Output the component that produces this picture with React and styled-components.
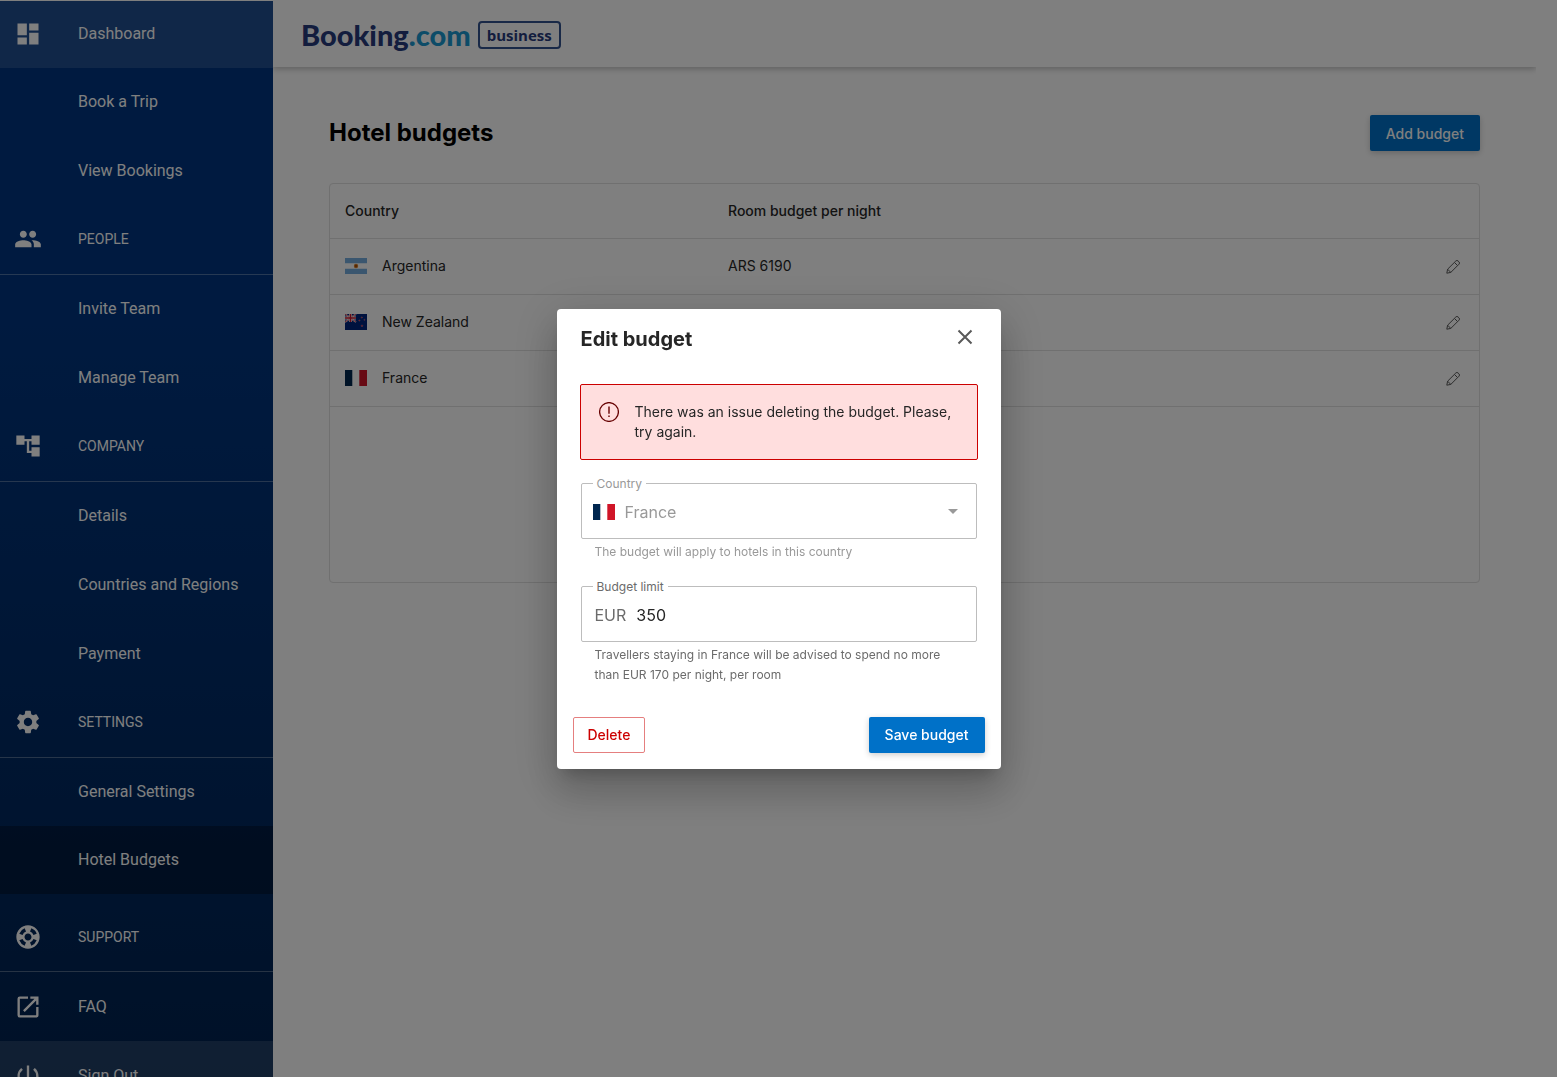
import React from 'react'
import styled, { createGlobalStyle } from 'styled-components'
import {
  MdAccountTree,
  MdDashboard,
  MdOpenInNew,
  MdPeople,
  MdPowerSettingsNew,
  MdSettings,
  MdSupport,
} from 'react-icons/md'

const SIDEBAR_WIDTH = 273

const GlobalStyle = createGlobalStyle`
  *, *::before, *::after {
    box-sizing: border-box;
  }
  body {
    margin: 0;
    background: #fff;
    color: #262626;
    font-family: Inter, sans-serif;
    font-size: 14px;
    line-height: 20px;
  }
  button, input, select {
    font-family: inherit;
  }
`

const Shell = styled.div`
  display: flex;
  height: 100vh;
  overflow: hidden;
`

const Sidebar = styled.nav`
  flex: 0 0 ${SIDEBAR_WIDTH}px;
  overflow: hidden;
  border-top: 1px solid #fff;
  background: linear-gradient(#003580 30%, #00224f 100%);
  font-family: Roboto, sans-serif;
`

const NavList = styled.ul`
  margin: 0;
  padding: 0;
  list-style: none;
`

const NavLink = styled.a`
  display: flex;
  align-items: center;
  height: ${props => props.$height || 69}px;
  padding: 0 14px ${props => props.$padBottom ?? 2}px;
  color: #fff;
  font-size: 16px;
  text-decoration: none;
  ${props => props.$tone === 'light' ? 'background: rgba(255, 255, 255, 0.13);' : ''}
  ${props => props.$tone === 'dark' ? 'background: rgba(0, 0, 0, 0.3);' : ''}
`

const NavHeading = styled(NavLink).attrs({ as: 'div' })`
  border-bottom: 1px solid rgba(255, 255, 255, 0.3);
  padding-top: ${props => props.$padTop || 0}px;
  font-size: 14px;
`

const NavIcon = styled.span`
  display: flex;
  flex: 0 0 64px;
  font-size: 28px;
`

const Main = styled.div`
  flex: 1;
  min-width: 0;
  margin-right: 21px;
`

const TopBar = styled.header`
  display: flex;
  align-items: center;
  gap: 7px;
  height: 67px;
  padding: 2px 28px 0;
  box-shadow: 0 2px 6px rgba(0, 0, 0, 0.25);
  clip-path: inset(0 0 -12px 0);
`

const Wordmark = styled.span`
  color: #273b7d;
  font-family: Lato, sans-serif;
  font-size: 29px;
  font-weight: 900;
  line-height: 32px;

  & span {
    color: #1a98d0;
  }
`

const WordmarkTag = styled.span`
  padding: 0 7px;
  border: 2px solid #33538f;
  border-radius: 4px;
  color: #273b7d;
  font-family: 'Open Sans', sans-serif;
  font-size: 15px;
  font-weight: 700;
  line-height: 24px;
`

const Content = styled.main`
  padding: 48px 56px;
`

const PageHead = styled.div`
  display: flex;
  align-items: center;
  justify-content: space-between;
  margin-bottom: 32px;
`

const PageTitle = styled.h1`
  margin: 0;
  color: #000;
  font-size: 24px;
  font-weight: 700;
  line-height: 36px;
`

const Button = styled.button`
  height: 36px;
  padding: 0 16px;
  border: 0;
  border-radius: 2px;
  background: #0071c8;
  color: #fff;
  font-size: 14px;
  font-weight: 500;
  box-shadow: 0 2px 6px rgba(0, 0, 0, 0.2);
  cursor: pointer;
`

const DeleteButton = styled(Button)`
  padding: 0 14px;
  border: 1px solid #e57f7f;
  background: #fff;
  color: #cc0000;
  box-shadow: none;
`

const Panel = styled.div`
  min-height: 400px;
  border: 1px solid #e0e0e0;
  border-radius: 4px;
`

const Table = styled.table`
  width: 100%;
  border-collapse: collapse;
  table-layout: fixed;

  & th, & td {
    height: 56px;
    padding: 0 15px;
    border-bottom: 1px solid #e0e0e0;
    text-align: left;
    font-weight: 400;
  }
  & thead th {
    height: 54px;
    font-weight: 500;
  }
  & td:last-child {
    padding-right: 19px;
    text-align: right;
  }
`

const CountryName = styled.span`
  display: flex;
  align-items: center;
  gap: 15px;
`

const IconButton = styled.button`
  display: inline-flex;
  padding: 0;
  border: 0;
  background: none;
  color: #595959;
  vertical-align: middle;
  cursor: pointer;
`

const Backdrop = styled.div`
  position: fixed;
  inset: 0;
  z-index: 10;
  display: flex;
  align-items: center;
  justify-content: center;
  background: rgba(0, 0, 0, 0.5);
`

const Dialog = styled.form`
  width: 444px;
  max-width: 100%;
  border-radius: 4px;
  background: #fff;
  box-shadow:
    0 11px 15px -7px rgba(0, 0, 0, 0.2),
    0 24px 38px 3px rgba(0, 0, 0, 0.14),
    0 9px 46px 8px rgba(0, 0, 0, 0.12);
`

const DialogHead = styled.div`
  display: flex;
  align-items: flex-start;
  justify-content: space-between;
  height: 60px;
  padding: 20px 28px 0 24px;
`

const DialogTitle = styled.h2`
  margin: 0;
  font-size: 20px;
  font-weight: 700;
  line-height: 20px;
`

const DialogBody = styled.div`
  padding: 15px 24px 32px;
`

const DialogActions = styled.div`
  display: flex;
  justify-content: space-between;
  padding: 0 16px 16px;
`

const Alert = styled.div`
  display: flex;
  gap: 16px;
  margin: 0 -1px 23px;
  padding: 17px 18px;
  border: 1px solid #cc0000;
  border-radius: 2px;
  background: #ffdede;

  & svg {
    flex: none;
  }
  & p {
    margin: 0;
  }
`

const Field = styled.div`
  color: ${props => props.$disabled ? '#999' : '#6b6b6b'};

  & + & {
    margin-top: 24px;
  }
`

const FieldBox = styled.div`
  position: relative;
  display: flex;
  align-items: center;
  gap: 10px;
  height: 56px;
  padding: 2px 18px 0 ${props => props.$inset || 13}px;
  border: 1px solid #bdbdbd;
  border-radius: 2px;
  font-size: 16px;
`

const FieldLabel = styled.label`
  position: absolute;
  top: -9px;
  left: 11px;
  padding: 0 4px;
  background: #fff;
  font-size: 12px;
  line-height: 18px;
`

const Select = styled.select`
  flex: 1;
  padding: 0;
  border: 0;
  background: none;
  color: #999;
  font-size: 16px;
  appearance: none;
  opacity: 1;
`

const Input = styled.input`
  flex: 1;
  min-width: 0;
  padding: 0;
  border: 0;
  background: none;
  color: #262626;
  font-size: 16px;
  outline: none;
`

const Hint = styled.p`
  margin: 3px 14px 0;
  font-size: 12px;
`

const FlagSvg = styled.svg.attrs({
  width: 22,
  height: 16,
  viewBox: '0 0 22 16',
  'aria-hidden': true,
})`
  flex: none;
`

const Argentina = () => (
  <FlagSvg>
    <path fill="#fff" d="M0 0h22v16H0z" />
    <path fill="#74acdf" d="M0 0h22v5.300H0zM0 10.700h22V16H0z" />
    <circle cx="11" cy="8" r="2.200" fill="#d9822b" />
    <circle cx="11" cy="8" r="1.200" fill="#a8500f" />
  </FlagSvg>
)

const NewZealand = () => (
  <FlagSvg>
    <path fill="#00247d" d="M0 0h22v16H0z" />
    <path stroke="#fff" strokeWidth="1.600" d="M0 0l11 8M11 0L0 8" />
    <path stroke="#cc142b" strokeWidth="0.8" d="M0 0l11 8M11 0L0 8" />
    <path stroke="#fff" strokeWidth="2.800" d="M5.500 0v8M0 4h11" />
    <path stroke="#cc142b" strokeWidth="1.600" d="M5.500 0v8M0 4h11" />
    <g fill="#cc142b" stroke="#fff" strokeWidth="0.2">
      <circle cx="16.800" cy="3.500" r="0.7" />
      <circle cx="14.400" cy="6.500" r="0.7" />
      <circle cx="19.400" cy="5.800" r="0.6" />
      <circle cx="17" cy="11.800" r="0.9" />
    </g>
  </FlagSvg>
)

const France = () => (
  <FlagSvg>
    <path fill="#fff" d="M0 0h22v16H0z" />
    <path fill="#00264f" d="M0 0h7.300v16H0z" />
    <path fill="#d01528" d="M14.300 0H22v16h-7.700z" />
  </FlagSvg>
)

const PencilIcon = () => (
  <svg width="14" height="14" viewBox="0 0 14 14" fill="none" stroke="currentColor" aria-hidden="true">
    <path d="M.8 13.200l.8-4 8.200-8.200a1.600 1.600 0 0 1 2.300 0l.9.900a1.600 1.600 0 0 1 0 2.300l-8.200 8.200zM1.600 9.200l3.200 3.200M8.600 2.600l2.800 2.800" />
  </svg>
)

const CloseIcon = () => (
  <svg width="16" height="16" viewBox="0 0 16 16" fill="none" stroke="currentColor" strokeWidth="2" aria-hidden="true">
    <path d="M1.500 1.500l13 13M14.500 1.500l-13 13" />
  </svg>
)

const AlertIcon = () => (
  <svg width="20" height="20" viewBox="0 0 20 20" fill="none" stroke="#660000" aria-hidden="true">
    <circle cx="10" cy="10" r="9.400" strokeWidth="1.300" />
    <path strokeWidth="1.400" d="M10 4.500v7.200M10 13.400v1.500" />
  </svg>
)

const CaretIcon = () => (
  <svg width="10" height="5" viewBox="0 0 10 5" fill="currentColor" aria-hidden="true">
    <path d="M0 0h10L5 5z" />
  </svg>
)

const navItems = [
  { label: 'Dashboard', icon: MdDashboard, height: 67, tone: 'light' },
  { label: 'Book a Trip' },
  { label: 'View Bookings' },
  { label: 'PEOPLE', icon: MdPeople, heading: true },
  { label: 'Invite Team' },
  { label: 'Manage Team' },
  { label: 'COMPANY', icon: MdAccountTree, heading: true },
  { label: 'Details' },
  { label: 'Countries and Regions' },
  { label: 'Payment' },
  { label: 'SETTINGS', icon: MdSettings, heading: true },
  { label: 'General Settings', height: 68, padBottom: 0 },
  { label: 'Hotel Budgets', height: 68, padBottom: 0, tone: 'dark' },
  { label: 'SUPPORT', icon: MdSupport, heading: true, height: 78, padTop: 9, padBottom: 0 },
  { label: 'FAQ', icon: MdOpenInNew, padBottom: 0 },
  { label: 'Sign Out', icon: MdPowerSettingsNew, padBottom: 0, tone: 'light' },
]

const budgets = [
  { country: 'Argentina', flag: Argentina, amount: 'ARS 6190' },
  { country: 'New Zealand', flag: NewZealand, amount: 'NZD 250' },
  { country: 'France', flag: France, amount: 'EUR 350' },
]

const NavItem = ({ label, icon: Icon, heading, height, padTop, padBottom, tone }) => {
  const Row = heading ? NavHeading : NavLink
  return (
    <li>
      <Row
        href={heading ? undefined : '#'}
        $height={height}
        $padTop={padTop}
        $padBottom={padBottom}
        $tone={tone}
      >
        <NavIcon>{Icon && <Icon aria-hidden="true" />}</NavIcon>
        {label}
      </Row>
    </li>
  )
}

const EditBudget = ({ onClose }) => {
  const [limit, setLimit] = React.useState('350')

  return (
    <Backdrop>
      <Dialog role="dialog" aria-labelledby="dialog-title" onSubmit={e => e.preventDefault()}>
        <DialogHead>
          <DialogTitle id="dialog-title">Edit budget</DialogTitle>
          <IconButton type="button" aria-label="Close" onClick={onClose}>
            <CloseIcon />
          </IconButton>
        </DialogHead>
        <DialogBody>
          <Alert role="alert">
            <AlertIcon />
            <p>There was an issue deleting the budget. Please, try again.</p>
          </Alert>
          <Field $disabled>
            <FieldBox $inset={11}>
              <FieldLabel htmlFor="country">Country</FieldLabel>
              <France />
              <Select id="country" disabled defaultValue="France">
                <option>France</option>
              </Select>
              <CaretIcon />
            </FieldBox>
            <Hint>The budget will apply to hotels in this country</Hint>
          </Field>
          <Field>
            <FieldBox>
              <FieldLabel htmlFor="limit">Budget limit</FieldLabel>
              <span>EUR</span>
              <Input id="limit" value={limit} onChange={e => setLimit(e.target.value)} />
            </FieldBox>
            <Hint>
              Travellers staying in France will be advised to spend no more than EUR 170 per night, per room
            </Hint>
          </Field>
        </DialogBody>
        <DialogActions>
          <DeleteButton type="button">Delete</DeleteButton>
          <Button type="submit">Save budget</Button>
        </DialogActions>
      </Dialog>
    </Backdrop>
  )
}

const App = () => {
  const [editing, setEditing] = React.useState(true)

  return (
    <>
      <GlobalStyle />
      <Shell>
        <Sidebar>
          <NavList>
            {navItems.map(item => <NavItem key={item.label} {...item} />)}
          </NavList>
        </Sidebar>
        <Main>
          <TopBar>
            <Wordmark>Booking<span>.com</span></Wordmark>
            <WordmarkTag>business</WordmarkTag>
          </TopBar>
          <Content>
            <PageHead>
              <PageTitle>Hotel budgets</PageTitle>
              <Button type="button">Add budget</Button>
            </PageHead>
            <Panel>
              <Table>
                <thead>
                  <tr>
                    <th scope="col">Country</th>
                    <th scope="col">Room budget per night</th>
                    <th />
                  </tr>
                </thead>
                <tbody>
                  {budgets.map(({ country, flag: Flag, amount }) => (
                    <tr key={country}>
                      <td><CountryName><Flag />{country}</CountryName></td>
                      <td>{amount}</td>
                      <td>
                        <IconButton type="button" aria-label={`Edit ${country}`} onClick={() => setEditing(true)}>
                          <PencilIcon />
                        </IconButton>
                      </td>
                    </tr>
                  ))}
                </tbody>
              </Table>
            </Panel>
          </Content>
        </Main>
      </Shell>
      {editing && <EditBudget onClose={() => setEditing(false)} />}
    </>
  )
}

export default App
